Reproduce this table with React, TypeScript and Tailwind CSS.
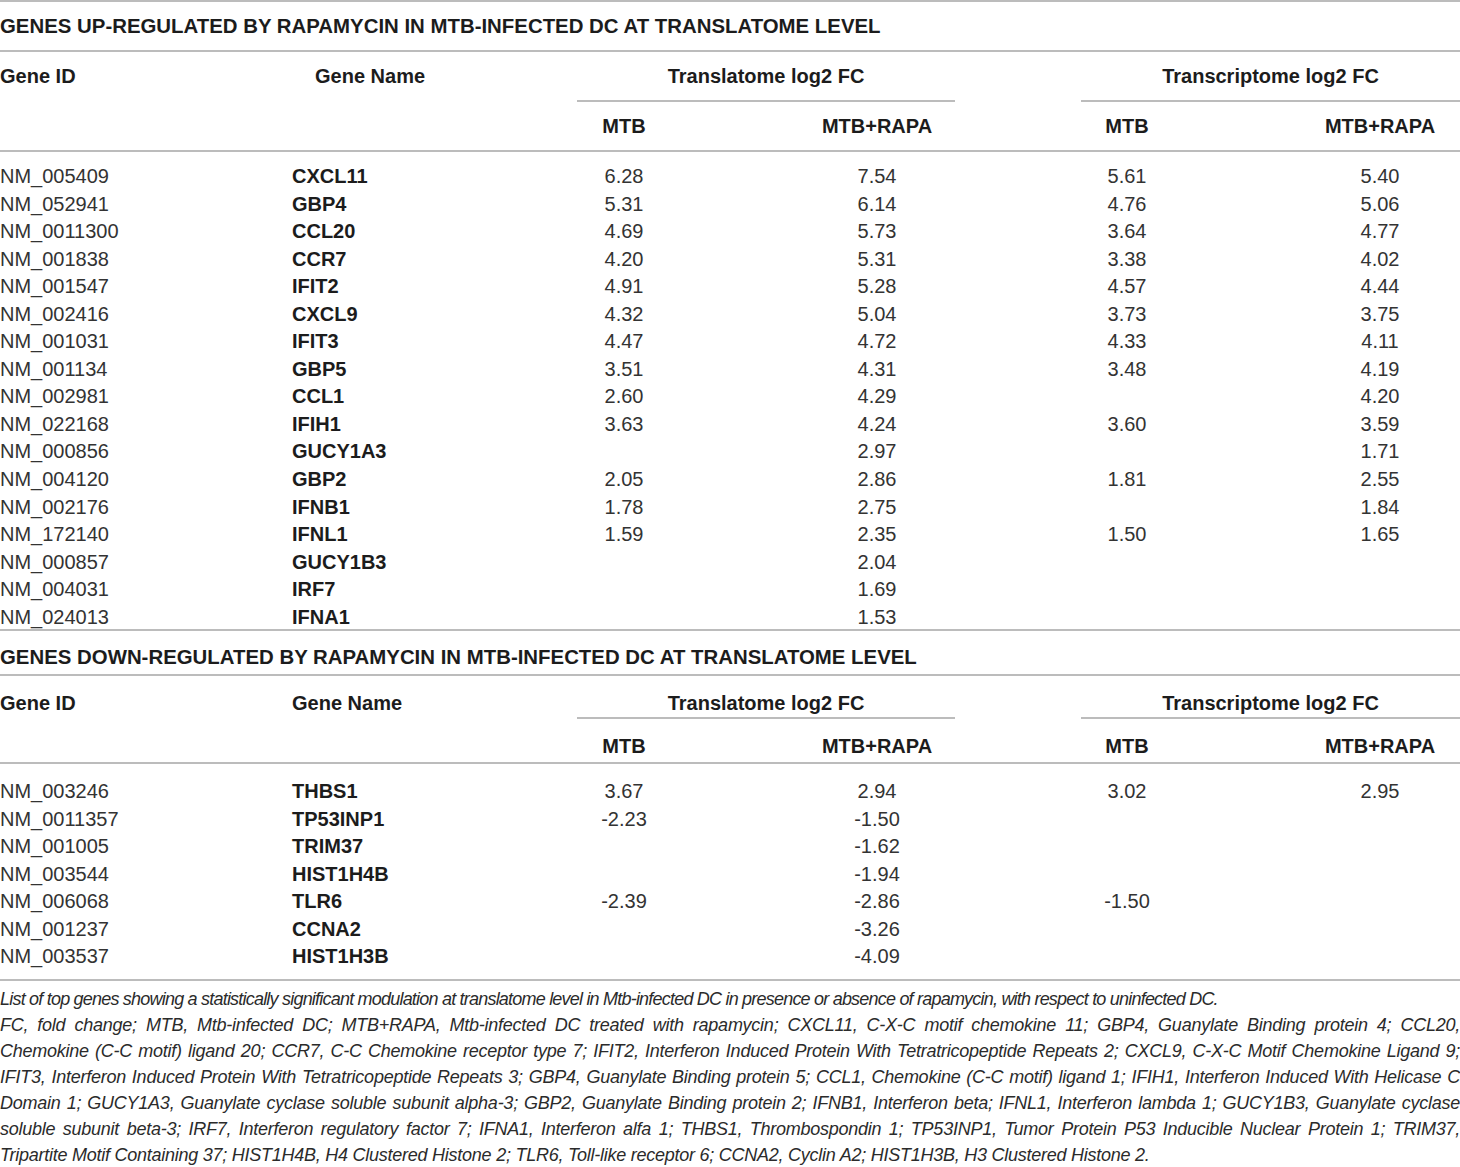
import React from 'react';

type Row = [string, string, string, string, string, string];

const upRows: Row[] = [
  ['NM_005409', 'CXCL11', '6.28', '7.54', '5.61', '5.40'],
  ['NM_052941', 'GBP4', '5.31', '6.14', '4.76', '5.06'],
  ['NM_0011300', 'CCL20', '4.69', '5.73', '3.64', '4.77'],
  ['NM_001838', 'CCR7', '4.20', '5.31', '3.38', '4.02'],
  ['NM_001547', 'IFIT2', '4.91', '5.28', '4.57', '4.44'],
  ['NM_002416', 'CXCL9', '4.32', '5.04', '3.73', '3.75'],
  ['NM_001031', 'IFIT3', '4.47', '4.72', '4.33', '4.11'],
  ['NM_001134', 'GBP5', '3.51', '4.31', '3.48', '4.19'],
  ['NM_002981', 'CCL1', '2.60', '4.29', '', '4.20'],
  ['NM_022168', 'IFIH1', '3.63', '4.24', '3.60', '3.59'],
  ['NM_000856', 'GUCY1A3', '', '2.97', '', '1.71'],
  ['NM_004120', 'GBP2', '2.05', '2.86', '1.81', '2.55'],
  ['NM_002176', 'IFNB1', '1.78', '2.75', '', '1.84'],
  ['NM_172140', 'IFNL1', '1.59', '2.35', '1.50', '1.65'],
  ['NM_000857', 'GUCY1B3', '', '2.04', '', ''],
  ['NM_004031', 'IRF7', '', '1.69', '', ''],
  ['NM_024013', 'IFNA1', '', '1.53', '', ''],
];

const downRows: Row[] = [
  ['NM_003246', 'THBS1', '3.67', '2.94', '3.02', '2.95'],
  ['NM_0011357', 'TP53INP1', '-2.23', '-1.50', '', ''],
  ['NM_001005', 'TRIM37', '', '-1.62', '', ''],
  ['NM_003544', 'HIST1H4B', '', '-1.94', '', ''],
  ['NM_006068', 'TLR6', '-2.39', '-2.86', '-1.50', ''],
  ['NM_001237', 'CCNA2', '', '-3.26', '', ''],
  ['NM_003537', 'HIST1H3B', '', '-4.09', '', ''],
];

// line breaks as set in the printed footnote
const footLines = [
  'FC, fold change; MTB, Mtb-infected DC; MTB+RAPA, Mtb-infected DC treated with rapamycin; CXCL11, C-X-C motif chemokine 11; GBP4, Guanylate Binding protein 4; CCL20,',
  'Chemokine (C-C motif) ligand 20; CCR7, C-C Chemokine receptor type 7; IFIT2, Interferon Induced Protein With Tetratricopeptide Repeats 2; CXCL9, C-X-C Motif Chemokine Ligand 9;',
  'IFIT3, Interferon Induced Protein With Tetratricopeptide Repeats 3; GBP4, Guanylate Binding protein 5; CCL1, Chemokine (C-C motif) ligand 1; IFIH1, Interferon Induced With Helicase C',
  'Domain 1; GUCY1A3, Guanylate cyclase soluble subunit alpha-3; GBP2, Guanylate Binding protein 2; IFNB1, Interferon beta; IFNL1, Interferon lambda 1; GUCY1B3, Guanylate cyclase',
  'soluble subunit beta-3; IRF7, Interferon regulatory factor 7; IFNA1, Interferon alfa 1; THBS1, Thrombospondin 1; TP53INP1, Tumor Protein P53 Inducible Nuclear Protein 1; TRIM37,',
];

const cols = 'grid grid-cols-[292px_285px_94px_128px_156px_126px_92px_127px_160px]';

function Rule() {
  return <div className="h-[2px] bg-[#bcbcbc]" />;
}

function DataRows({ rows, rowH }: { rows: Row[]; rowH: string }) {
  return <>
      {rows.map(r => <div key={r[0]} className={`${cols} ${rowH} items-center text-[20px] text-[#333]`}>
          <div>{r[0]}</div>
          <div className="font-bold text-[#1c1c1c]">{r[1]}</div>
          <div className="text-center">{r[2]}</div>
          <div />
          <div className="text-center">{r[3]}</div>
          <div />
          <div className="text-center">{r[4]}</div>
          <div />
          <div className="text-center">{r[5]}</div>
        </div>)}
    </>;
}

function Header({ compact, nameIndent }: { compact?: boolean; nameIndent?: boolean }) {
  const top = compact ? 'h-[41px] items-end pb-[2px]' : 'h-[48px] items-center';
  const sub = compact ? 'h-[43px] items-start pt-[15px]' : 'h-[48px] items-center';
  return <div className={`${cols} font-bold text-[20px] leading-[24px] text-[#1c1c1c]`}>
      <div className={`row-start-1 col-start-1 flex ${top}`}>Gene ID</div>
      <div className={`row-start-1 col-start-2 flex ${top} ${nameIndent ? 'pl-[23px]' : ''}`}>Gene Name</div>
      <div className={`row-start-1 col-start-3 col-span-3 flex justify-center ${top}`}>Translatome log2 FC</div>
      <div className={`row-start-1 col-start-7 col-span-3 flex justify-center ${top}`}>Transcriptome log2 FC</div>
      <div className="row-start-2 col-start-3 col-span-3 h-[2px] bg-[#bcbcbc]" />
      <div className="row-start-2 col-start-7 col-span-3 h-[2px] bg-[#bcbcbc]" />
      <div className={`row-start-3 col-start-3 flex justify-center ${sub}`}>MTB</div>
      <div className={`row-start-3 col-start-5 flex justify-center ${sub}`}>MTB+RAPA</div>
      <div className={`row-start-3 col-start-7 flex justify-center ${sub}`}>MTB</div>
      <div className={`row-start-3 col-start-9 flex justify-center ${sub}`}>MTB+RAPA</div>
    </div>;
}

export default function App() {
  return <div className="w-[1460px] bg-white font-['Liberation_Sans',Arial,sans-serif]">
      <Rule />
      <div className="h-[48px] flex items-center font-bold text-[20.4px] text-[#1c1c1c]">
        GENES UP-REGULATED BY RAPAMYCIN IN MTB-INFECTED DC AT TRANSLATOME LEVEL
      </div>
      <Rule />
      <Header nameIndent />
      <Rule />
      <div className="pt-[9px]">
        <DataRows rows={upRows} rowH="h-[27.56px]" />
      </div>
      <Rule />
      <div className="h-[43px] pt-[14px] leading-[24px] font-bold text-[20.4px] text-[#1c1c1c]">
        GENES DOWN-REGULATED BY RAPAMYCIN IN MTB-INFECTED DC AT TRANSLATOME LEVEL
      </div>
      <Rule />
      <Header compact />
      <Rule />
      <div className="pt-[12px] pb-[10.5px]">
        <DataRows rows={downRows} rowH="h-[27.5px]" />
      </div>
      <Rule />
      <div className="pt-[5px] italic text-[18px] leading-[26px] text-[#2b2b2b]">
        <p className="tracking-[-0.79px]">
          List of top genes showing a statistically significant modulation at translatome level in Mtb-infected DC in presence or absence of rapamycin, with respect to uninfected DC.
        </p>
        <div className="tracking-[-0.25px]">
          {footLines.map(l => <p key={l} className="text-justify [text-align-last:justify]">
              {l}
            </p>)}
          <p>
            Tripartite Motif Containing 37; HIST1H4B, H4 Clustered Histone 2; TLR6, Toll-like receptor 6; CCNA2, Cyclin A2; HIST1H3B, H3 Clustered Histone 2.
          </p>
        </div>
      </div>
    </div>;
}
